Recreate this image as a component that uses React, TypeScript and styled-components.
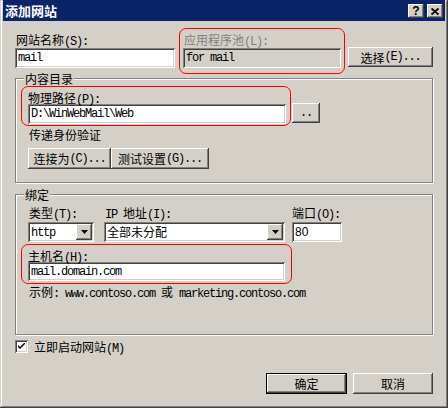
import styled, { createGlobalStyle } from "styled-components"

const GlobalStyle = createGlobalStyle`
  html, body {
    margin: 0;
    padding: 0;
    background: #d4d0c8;
  }
  body {
    font-family: "Noto Sans CJK SC", "Noto Sans", sans-serif;
    font-size: 12px;
    color: #000;
  }
`

const raised = `
  box-shadow: inset -1px -1px #404040, inset 1px 1px #fff, inset -2px -2px #808080, inset 2px 2px #d4d0c8;
`
const sunken = `
  box-shadow: inset 1px 1px #808080, inset -1px -1px #fff, inset 2px 2px #404040, inset -2px -2px #d4d0c8;
`

const Window = styled.div`
  width: 448px;
  height: 408px;
  box-sizing: border-box;
  padding: 0 3px 3px 3px;
  background: #d4d0c8;
  box-shadow: inset -1px -1px #404040, inset 1px 1px #d4d0c8, inset -2px -2px #808080, inset 2px 2px #fff;
  display: flex;
  flex-direction: column;
`

const TitleBar = styled.div`
  height: 21px;
  box-sizing: border-box;
  padding: 3px 2px 2px 2px;
  background: #0a246a;
  display: flex;
  align-items: center;
`

const TitleText = styled.div`
  flex: 1;
  color: #fff;
  font-weight: bold;
  font-size: 13px;
  line-height: 16px;
`

const CaptionButton = styled.div<{ $gap?: number }>`
  width: 16px;
  height: 14px;
  margin-left: ${p => p.$gap ?? 0}px;
  background: #d4d0c8;
  ${raised}
  display: flex;
  align-items: center;
  justify-content: center;
  font-family: "Liberation Sans", sans-serif;
  font-weight: bold;
  font-size: 12px;
  line-height: 12px;
`

const Content = styled.div`
  flex: 1;
  padding: 7px 12px 0 12px;
  display: flex;
  flex-direction: column;
`

// SimSun-like half-width latin: 6px advance
const Latin = styled.span`
  font-family: "Liberation Mono", monospace;
  font-size: 12px;
  letter-spacing: -1.2px;
`

const Label = styled.div<{ $lh?: number; $mb?: number; $ml?: number; $disabled?: boolean }>`
  line-height: ${p => p.$lh ?? 13}px;
  height: ${p => p.$lh ?? 13}px;
  margin-bottom: ${p => p.$mb ?? 0}px;
  margin-left: ${p => p.$ml ?? 1}px;
  color: ${p => (p.$disabled ? "#808080" : "#000")};
  white-space: nowrap;
`

const Field = styled.div<{ $w: number; $h?: number; $ro?: boolean; $sans?: boolean }>`
  width: ${p => p.$w}px;
  height: ${p => p.$h ?? 20}px;
  box-sizing: border-box;
  padding: 0 3px;
  background: ${p => (p.$ro ? "#d4d0c8" : "#fff")};
  ${sunken}
  display: flex;
  align-items: center;
  font-family: ${p => (p.$sans ? '"Liberation Sans", sans-serif' : '"Liberation Mono", monospace')};
  font-size: 12px;
  letter-spacing: ${p => (p.$sans ? 0 : -1.2)}px;
  white-space: nowrap;
  overflow: hidden;
`

const Button = styled.div<{ $w: number; $h?: number; $mt?: number; $ml?: number; $default?: boolean }>`
  width: ${p => p.$w}px;
  height: ${p => p.$h ?? 20}px;
  margin-top: ${p => p.$mt ?? 0}px;
  margin-left: ${p => p.$ml ?? 0}px;
  flex-shrink: 0;
  box-sizing: border-box;
  background: #d4d0c8;
  ${p =>
    p.$default
      ? "box-shadow: inset 0 0 0 1px #000, inset -2px -2px #404040, inset 2px 2px #fff, inset -3px -3px #808080;"
      : raised}
  display: flex;
  align-items: center;
  justify-content: center;
  white-space: nowrap;
`

const Highlight = styled.div<{ $pad: string; $ml?: number; $mt?: number }>`
  border: 1px solid #f00;
  border-radius: 7px;
  padding: ${p => p.$pad};
  margin-left: ${p => p.$ml ?? 0}px;
  margin-top: ${p => p.$mt ?? 0}px;
  flex-shrink: 0;
`

const Row = styled.div<{ $mt?: number; $ml?: number }>`
  display: flex;
  align-items: flex-start;
  margin-top: ${p => p.$mt ?? 0}px;
  margin-left: ${p => p.$ml ?? 0}px;
`

const Column = styled.div<{ $mt?: number; $ml?: number }>`
  display: flex;
  flex-direction: column;
  margin-top: ${p => p.$mt ?? 0}px;
  margin-left: ${p => p.$ml ?? 0}px;
`

const Group = styled.div<{ $h: number; $mt: number; $pt: number }>`
  position: relative;
  width: 418px;
  height: ${p => p.$h}px;
  margin-top: ${p => p.$mt}px;
  box-sizing: border-box;
  border: 1px solid #808080;
  box-shadow: inset 1px 1px #fff, 1px 1px #fff;
  padding: ${p => p.$pt}px 0 0 5px;
`

const GroupTitle = styled.div`
  position: absolute;
  top: -7px;
  left: 8px;
  padding: 0 1px;
  line-height: 13px;
  background: #d4d0c8;
`

const Select = styled.div<{ $w: number }>`
  width: ${p => p.$w}px;
  height: 20px;
  box-sizing: border-box;
  padding: 2px 2px 2px 3px;
  background: #fff;
  ${sunken}
  display: flex;
  align-items: center;
`

const SelectText = styled.div`
  flex: 1;
  line-height: 16px;
  white-space: nowrap;
`

const ArrowButton = styled.div`
  width: 16px;
  height: 16px;
  background: #d4d0c8;
  ${raised}
  display: flex;
  align-items: center;
  justify-content: center;
`

const CheckRow = styled.div`
  display: flex;
  align-items: center;
  margin-top: 5px;
  height: 13px;
`

const CheckBox = styled.div`
  width: 13px;
  height: 13px;
  box-sizing: border-box;
  background: #fff;
  ${sunken}
  display: flex;
  align-items: center;
  justify-content: center;
`

const Footer = styled.div`
  display: flex;
  justify-content: flex-end;
  gap: 6px;
  margin-top: 20px;
`

const Arrow = () => (
  <svg width="7" height="4" viewBox="0 0 7 4">
    <polygon points="0,0 7,0 3.5,4" fill="#000" />
  </svg>
)

const SelectBox = ({ w, children }: { w: number; children: React.ReactNode }) => (
  <Select $w={w}>
    <SelectText>{children}</SelectText>
    <ArrowButton>
      <Arrow />
    </ArrowButton>
  </Select>
)

const App = () => {
  return (
    <>
      <GlobalStyle />
      <Window>
        <TitleBar>
          <TitleText>添加网站</TitleText>
          <CaptionButton>?</CaptionButton>
          <CaptionButton $gap={3}>
            <svg width="8" height="7" viewBox="0 0 8 7">
              <path d="M0.5 0.5 L7.5 6.5 M7.5 0.5 L0.5 6.5" stroke="#000" strokeWidth="1.8" />
            </svg>
          </CaptionButton>
        </TitleBar>

        <Content>
          <Row>
            <Column $mt={5}>
              <Label $mb={2}>
                网站名称<Latin>(S):</Latin>
              </Label>
              <Field $w={160}>mail</Field>
            </Column>
            <Highlight $pad="4px 3px 5px 3px" $ml={4}>
              <Label $mb={2} $disabled>
                应用程序池<Latin>(L):</Latin>
              </Label>
              <Field $w={158} $ro>
                for mail
              </Field>
            </Highlight>
            <Button $w={85} $mt={19} $ml={3}>
              选择<Latin>(E)...</Latin>
            </Button>
          </Row>

          <Group $h={105} $mt={4} $pt={7}>
            <GroupTitle>内容目录</GroupTitle>
            <Row>
              <Highlight $pad="5px 4px 1px 6px">
                <Label $lh={12} $ml={0}>
                  物理路径<Latin>(P):</Latin>
                </Label>
                <Field $w={258}>D:\WinWebMail\Web</Field>
              </Highlight>
              <Button $w={28} $mt={17} $ml={1}>
                <Latin>..</Latin>
              </Button>
            </Row>
            <Label $ml={8} style={{ marginTop: 2 }}>
              传递身份验证
            </Label>
            <Row $mt={7} $ml={7}>
              <Button $w={83} $h={21}>
                连接为<Latin>(C)...</Latin>
              </Button>
              <Button $w={98} $h={21}>
                测试设置<Latin>(G)...</Latin>
              </Button>
            </Row>
          </Group>

          <Group $h={141} $mt={11} $pt={11}>
            <GroupTitle>绑定</GroupTitle>
            <Row>
              <Column $ml={7}>
                <Label $mb={3}>
                  类型<Latin>(T):</Latin>
                </Label>
                <SelectBox w={66}>
                  <Latin>http</Latin>
                </SelectBox>
              </Column>
              <Column $ml={10}>
                <Label $mb={3}>
                  <Latin>IP </Latin>地址<Latin>(I):</Latin>
                </Label>
                <SelectBox w={181}>全部未分配</SelectBox>
              </Column>
              <Column $ml={7}>
                <Label $mb={3} $ml={0}>
                  端口<Latin>(O):</Latin>
                </Label>
                <Field $w={50} $sans>
                  80
                </Field>
              </Column>
            </Row>
            <Highlight $pad="5px 6px 2px 6px" $mt={2} style={{ width: 257 }}>
              <Label $lh={12} $ml={0}>
                主机名<Latin>(H):</Latin>
              </Label>
              <Field $w={257} $h={19}>
                mail.domain.com
              </Field>
            </Highlight>
            <Label $ml={8} style={{ marginTop: 1 }}>
              示例<Latin>: www.contoso.com </Latin>或<Latin> marketing.contoso.com</Latin>
            </Label>
          </Group>

          <CheckRow>
            <CheckBox>
              <svg width="7" height="7" viewBox="0 0 7 7">
                <path d="M0 2 L2 4 L7 -1 L7 1 L2 6 L0 4 Z" fill="#000" />
              </svg>
            </CheckBox>
            <Label $ml={6}>
              立即启动网站<Latin>(M)</Latin>
            </Label>
          </CheckRow>

          <Footer>
            <Button $w={81} $h={21} $default>
              确定
            </Button>
            <Button $w={80} $h={21}>
              取消
            </Button>
          </Footer>
        </Content>
      </Window>
    </>
  )
}

export default App
